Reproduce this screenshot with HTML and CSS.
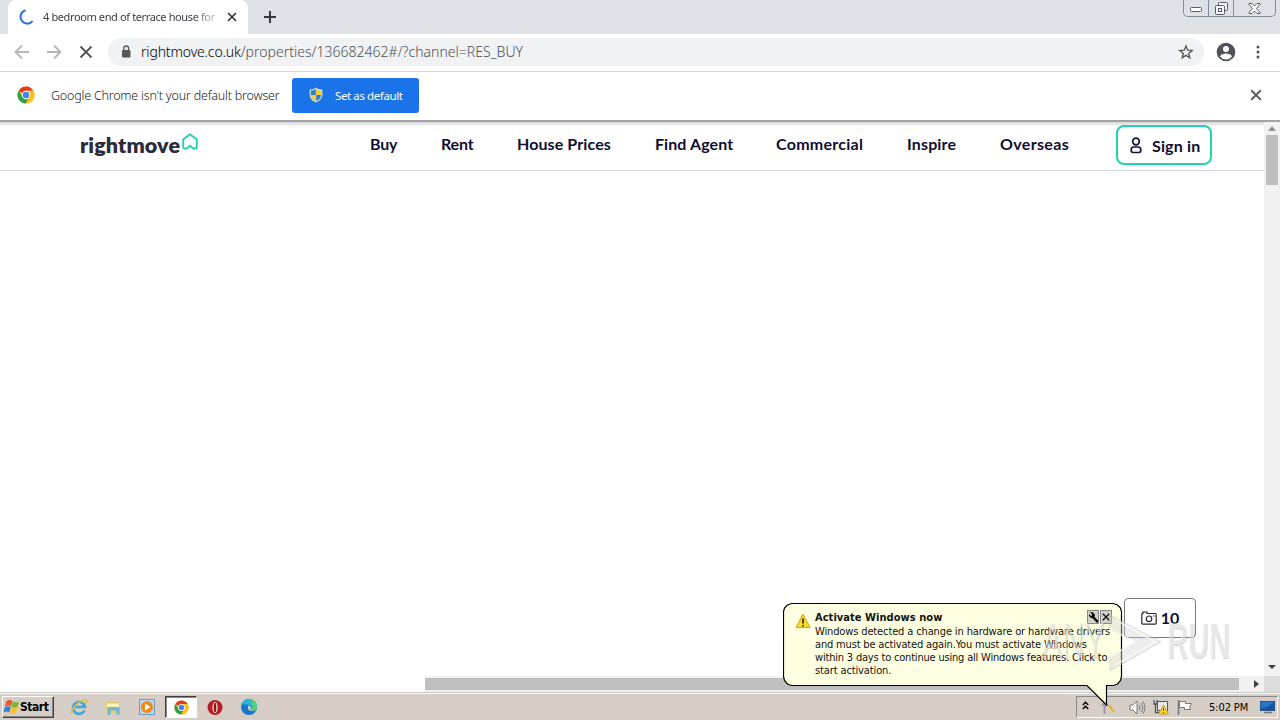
FILE: index.html
```html
<!DOCTYPE html>
<html lang="en">
<head>
    <meta charset="UTF-8">
    <meta name="viewport" content="width=device-width, initial-scale=1.0">
    <title>4 bedroom end of terrace house for sale</title>
    <link rel="stylesheet" href="styles.css">
</head>
<body>
    <!-- shared icons -->
    <svg class="icon-defs" width="0" height="0">
        <symbol id="chrome-logo" viewBox="0 0 18 18">
            <circle cx="9" cy="9" r="8.5" fill="#fbc116"/>
            <path d="M9 9 1.6 4.8A8.5 8.5 0 0 1 16.4 4.8H9z" fill="#e33b2e"/>
            <path d="M1.6 4.8A8.5 8.5 0 0 0 8.7 17.5L12.4 11 9 9 5.4 11z" fill="#2aa04a"/>
            <path d="M9 4.8H16.4A8.5 8.5 0 0 1 8.7 17.5L12.5 11z" fill="#fbc116"/>
            <circle cx="9" cy="9" r="4.2" fill="#fff"/>
            <circle cx="9" cy="9" r="3.3" fill="#4285e8"/>
        </symbol>
        <symbol id="cross" viewBox="0 0 10 10">
            <path d="M1 1l8 8M9 1L1 9" fill="none" stroke="currentColor" stroke-width="1.6"/>
        </symbol>
    </svg>

    <div class="tab-strip">
        <div class="tab">
            <svg class="spinner" width="16" height="16" viewBox="0 0 16 16"><path d="M6.5 1.3A6.8 6.8 0 1 0 13.6 12.2" fill="none" stroke="#2b6fdc" stroke-width="2"/></svg>
            <span class="tab-title">4 bedroom end of terrace house for</span>
            <svg class="tab-close" width="10" height="10"><use href="#cross"/></svg>
        </div>
        <svg class="new-tab" width="12" height="12" viewBox="0 0 12 12"><path d="M6 0v12M0 6h12" stroke="#35383d" stroke-width="2"/></svg>
        <div class="window-buttons">
            <span class="win-btn win-min"><svg width="13" height="6" viewBox="0 0 13 6"><rect x=".5" y=".5" width="11" height="4" rx="1" fill="#fff" stroke="#555c68"/></svg></span>
            <span class="win-btn win-max"><svg width="13" height="13" viewBox="0 0 13 13" fill="#f5f6f8" stroke="#555c68"><rect x="3.5" y=".5" width="9" height="8" rx="1"/><rect x=".5" y="3.5" width="9" height="9" rx="1"/><rect x="3.5" y="6.5" width="3" height="3"/></svg></span>
            <span class="win-btn win-close"><svg width="13" height="11" viewBox="0 0 13 11"><path d="M1 .5h3L6.5 3 9 .5h3v1L8.5 5.5 12 9.5v1H9L6.5 8 4 10.5H1v-1L4.5 5.5 1 1.5z" fill="#fff" stroke="#555c68"/></svg></span>
        </div>
    </div>

    <div class="toolbar">
        <svg class="nav-icon" width="16" height="16" viewBox="0 0 16 16"><path d="M15 8H2M8 1.5L1.5 8 8 14.5" fill="none" stroke="#b5b7ba" stroke-width="1.8"/></svg>
        <svg class="nav-icon" width="16" height="16" viewBox="0 0 16 16"><path d="M1 8h13M8 1.5L14.5 8 8 14.5" fill="none" stroke="#b5b7ba" stroke-width="1.8"/></svg>
        <svg class="nav-icon" width="16" height="16" viewBox="0 0 16 16"><path d="M2.5 2.5l11 11M13.5 2.5l-11 11" fill="none" stroke="#505357" stroke-width="1.8"/></svg>
        <div class="address-bar">
            <svg class="lock" width="10" height="13" viewBox="0 0 10 13"><rect x="1" y="5" width="8.5" height="7.5" rx="1" fill="#55585d"/><path d="M2.8 5V3.4a2.4 2.4 0 0 1 4.8 0V5" fill="none" stroke="#55585d" stroke-width="1.3"/></svg>
            <span class="url"><span class="url-host">rightmove.co.uk</span>/properties/136682462#/?channel=RES_BUY</span>
            <svg class="star" width="16" height="16" viewBox="0 0 16 16"><path d="M8 2l1.7 4.2 4.5.3-3.5 2.9 1.1 4.4L8 11.4l-3.8 2.4 1.1-4.4L1.8 6.5l4.5-.3z" fill="none" stroke="#54575c" stroke-width="1.4"/></svg>
        </div>
        <svg class="avatar" width="20" height="20" viewBox="0 0 20 20"><circle cx="10" cy="10" r="9.3" fill="#505359"/><circle cx="10" cy="7" r="3" fill="#fff"/><path d="M4 14.5c1-2.3 3.5-3 6-3s5 .7 6 3a7.6 7.6 0 0 1-12 0z" fill="#fff"/></svg>
        <svg class="menu-dots" width="4" height="14" viewBox="0 0 4 14" fill="#505359"><circle cx="2" cy="2" r="1.5"/><circle cx="2" cy="7" r="1.5"/><circle cx="2" cy="12" r="1.5"/></svg>
    </div>

    <div class="infobar">
        <svg width="18" height="18"><use href="#chrome-logo"/></svg>
        <span class="infobar-text">Google Chrome isn't your default browser</span>
        <button class="default-button">
            <svg width="14" height="16" viewBox="0 0 14 16"><path d="M7 .5C5 2 3 2.4.6 2.4V8C.6 11.5 3.5 14 7 15.5 10.5 14 13.4 11.5 13.4 8V2.4C11 2.4 9 2 7 .5z" fill="#c9d8c4"/><path d="M6.8 2v6H2V3.5C4 3.5 5.5 3 6.8 2zM7.2 8H12c0 3-2 4.7-4.8 6z" fill="#2b7bd0"/><path d="M7.2 2v6H12V3.5C10 3.5 8.5 3 7.2 2zM6.8 8H2c0 3 2 4.7 4.8 6z" fill="#f4cb32"/></svg>
            <span>Set as default</span>
        </button>
        <svg class="infobar-close" width="12" height="12"><use href="#cross"/></svg>
    </div>

    <div class="viewport">
        <div class="page">
            <header class="site-header">
                <div class="logo">
                    <span class="logo-text">rightmove</span>
                    <svg width="16" height="17" viewBox="0 0 16 17"><path d="M1.2 6.6L8 1.2l6.8 5.4v7.6q0 1.300-1.300 1.300h-2.200L8 12.700l-3.300 2.800H2.500q-1.300 0-1.300-1.300z" fill="none" stroke="#22d3ac" stroke-width="1.9" stroke-linejoin="round"/></svg>
                </div>
                <nav class="site-nav">
                    <a class="nav-buy">Buy</a>
                    <a class="nav-rent">Rent</a>
                    <a class="nav-prices">House Prices</a>
                    <a class="nav-agent">Find Agent</a>
                    <a class="nav-commercial">Commercial</a>
                    <a class="nav-inspire">Inspire</a>
                    <a class="nav-overseas">Overseas</a>
                </nav>
                <a class="sign-in">
                    <svg width="12" height="17" viewBox="0 0 12 17" fill="none" stroke="#16133a" stroke-width="1.7"><circle cx="6" cy="4.5" r="3.3"/><path d="M3.5 10h5c1.500 0 2.300 1.200 2.300 3.300 0 1.600-.6 2.200-1.800 2.200H3c-1.200 0-1.800-.6-1.800-2.200C1.200 11.200 2 10 3.500 10z"/></svg>
                    <span>Sign in</span>
                </a>
            </header>
            <main class="listing">
                <button class="photo-count">
                    <svg width="16" height="14" viewBox="0 0 16 14" fill="none" stroke="#25253a" stroke-width="1.2"><path d="M.8 3.500q0-1 1-1H2V1h4v1.500h8.200q1 0 1 1v8.700q0 1-1 1H1.800q-1 0-1-1z"/><circle cx="8" cy="7.8" r="2.8"/><path d="M12 5h1.500"/></svg>
                    <span>10</span>
                </button>
            </main>
            <div class="scroll-x">
                <div class="scroll-x-thumb"></div>
                <svg width="5" height="8" viewBox="0 0 5 8"><path d="M0 0l5 4-5 4z" fill="#404040"/></svg>
            </div>
        </div>
        <div class="scroll-y">
            <svg width="8" height="5" viewBox="0 0 8 5"><path d="M0 5l4-5 4 5z" fill="#929292"/></svg>
            <div class="scroll-y-thumb"></div>
            <svg class="scroll-down" width="8" height="4" viewBox="0 0 8 4"><path d="M0 0h8L4 4z" fill="#404040"/></svg>
            <div class="scroll-corner"></div>
        </div>
    </div>

    <div class="taskbar">
        <button class="start-button">
            <svg width="17" height="16" viewBox="0 0 17 16"><path d="M3.500 2q3-2 6 0L8 7.500q-3-2-6 0z" fill="#e8562a"/><path d="M10 2.500q3 1.500 6 0L14.500 8q-3 1.500-6 0z" fill="#77b82f"/><path d="M1.800 8q3-1.500 6 0L6.500 13.500q-3-2-6 0z" fill="#3a82cf"/><path d="M8.200 8.600q3 1.500 6 0L13 14q-3 1.500-6 0z" fill="#f4c02c"/></svg>
            <span>Start</span>
        </button>
        <div class="quick-launch">
            <span class="task"><svg width="18" height="18" viewBox="0 0 18 18"><path d="M14.500 12.500A6 6 0 1 1 15 9H4" fill="none" stroke="#3fa6dd" stroke-width="2.6"/><path d="M2 16C-1 12 13-1 16.500 2c1 1 0 3-.5 4" fill="none" stroke="#e8bd36" stroke-width="1.5"/></svg></span>
            <span class="task"><svg width="17" height="17" viewBox="0 0 17 17"><path d="M1 2h5l1 1h8v11H1z" fill="#e6cb6c"/><path d="M2 4.500h12v4H2z" fill="#fff2b5"/><path d="M2.500 16V9.500q0-1.500 1.500-1.500h9q1.500 0 1.500 1.500V16h-3v-4.500h-6V16z" fill="#6db7d9"/></svg></span>
            <span class="task"><svg width="17" height="17" viewBox="0 0 17 17"><rect x=".5" y=".5" width="15" height="15" fill="#b9d8ee" stroke="#6b9cc4"/><circle cx="8" cy="8" r="6" fill="#f18a1d"/><path d="M6 4.500v7L11.500 8z" fill="#fff"/></svg></span>
            <span class="task task-active"><svg width="15" height="15"><use href="#chrome-logo"/></svg></span>
            <span class="task"><svg width="17" height="17" viewBox="0 0 17 17"><circle cx="8" cy="8.500" r="7.500" fill="#b61d20"/><ellipse cx="8" cy="8.500" rx="2.600" ry="5.800" fill="#f3e4e0"/><ellipse cx="8" cy="8.500" rx="1.300" ry="5" fill="#981417"/></svg></span>
            <span class="task"><svg width="18" height="18" viewBox="0 0 18 18"><circle cx="9" cy="9" r="8" fill="#1479ca"/><path d="M1.200 7A8 8 0 0 1 17 9c0 3-3 4-6 3 1-1 1-4-2-5-3-1-6-1-7.800 0z" fill="#2fb5d4"/><path d="M10 1.100a8 8 0 0 1 7 8c0 3-3 4-6 3 2-2 2-6-1-11z" fill="#56cf75"/><path d="M8.500 7.500c-1.500 3 0 5.500 4 5.500l4-1c-1 .8-5 1-6-.5 1-1 .5-3-2-4z" fill="#d6ccc2"/></svg></span>
        </div>
        <div class="tray">
            <svg class="tray-more" width="7" height="9" viewBox="0 0 7 9"><path d="M.8 4l2.700-2.700L6.200 4M.8 8l2.700-2.700L6.200 8" fill="none" stroke="#000" stroke-width="1.4"/></svg>
            <svg class="tray-keys" width="15" height="15" viewBox="0 0 15 15"><path d="M3.500 4v10M1 5.500q3-4 6 0" fill="none" stroke="#9993a4" stroke-width="2"/><path d="M8 5l5 7" stroke="#e5b849" stroke-width="3"/></svg>
            <svg class="tray-sound" width="17" height="15" viewBox="0 0 17 15"><path d="M1 5h3l4-4v13l-4-4H1z" fill="#fff" stroke="#777"/><path d="M10 5q2 2.500 0 5M12 3q3.500 4.500 0 9M14 1.500q4 6 0 12" fill="none" stroke="#777"/></svg>
            <svg class="tray-network" width="17" height="16" viewBox="0 0 17 16"><path d="M4.500 2.500h10v9h-10z" fill="#e6e8ec" stroke="#555"/><path d="M1 1v4h3V1M2.500 5v8.500H6" fill="none" stroke="#555" stroke-width="1.3"/><path d="M10.500 6l5 9h-10z" fill="#ffd52b" stroke="#c59c16"/><path d="M10.500 9v3M10.500 13v1" stroke="#333"/></svg>
            <svg class="tray-flag" width="16" height="15" viewBox="0 0 16 15"><path d="M1.500 0v15" stroke="#777" stroke-width="1.5"/><path d="M2.500 1.500h6v2h6l-2 4 1 2h-6v-2h-5z" fill="#fff" stroke="#777"/></svg>
            <span class="clock">5:02 PM</span>
            <svg class="tray-desktop" width="16" height="13" viewBox="0 0 16 13"><rect x=".5" y=".5" width="14" height="9" fill="#2a76cd" stroke="#245589"/><path d="M1 7q7 0 13-6v8H1z" fill="#1654a5"/><path d="M4 11.500h8" stroke="#777" stroke-width="1.5"/></svg>
        </div>
    </div>

    <div class="balloon">
        <svg class="balloon-shape" width="340" height="106" viewBox="0 0 340 106"><path d="M8.500 1.500h322l4 1.500 3 3 1 3.500v65l-1 4-3 3.500-4 1.500h-7V103L304 83.500H8.500l-4-1.500-3-3.500-1-4v-65l1-3.500 3-3z" fill="#ffffe1" stroke="#000" stroke-width="1.2"/></svg>
        <svg class="balloon-warning" width="16" height="16" viewBox="0 0 16 16"><path d="M8 1l7 13.500H1z" fill="#f9d923" stroke="#d3a725" stroke-linejoin="round"/><path d="M8 5.500v5M8 12v1.500" stroke="#333" stroke-width="1.8"/></svg>
        <div class="balloon-body">
            <strong>Activate Windows now</strong>
            <p>
                <span class="line-1">Windows detected a change in hardware or hardware drivers</span>
                <span class="line-2">and must be activated again.You must activate Windows</span>
                <span class="line-3">within 3 days to continue using all Windows features. Click to</span>
                <span class="line-4">start activation.</span>
            </p>
        </div>
        <div class="balloon-buttons">
            <span><svg width="11" height="12" viewBox="0 0 11 12"><path d="M2 1L5 1.500 7 4 6.500 6 10 9.500v2H8.500L5 7.500 3 7 1 5V3l2 2 1.500-1z" fill="#000"/></svg></span>
            <span><svg width="8" height="8"><use href="#cross"/></svg></span>
        </div>
    </div>

    <div class="watermark">
        <span class="mark-any">ANY</span>
        <svg width="60" height="62" viewBox="0 0 60 62"><path d="M4 3l51 27L4 59V45l25-15L4 17z" fill="#d0d0d0" fill-opacity=".4" stroke="#b0b0b0" stroke-opacity=".35"/><path d="M4 17l25 13L4 45M10 8l39 22L9 53" fill="none" stroke="#fff" stroke-opacity=".6" stroke-width="2"/></svg>
        <span class="mark-run">RUN</span>
    </div>
</body>
</html>
```
FILE: styles.css
```css
* {
    margin: 0;
    padding: 0;
    box-sizing: border-box;
}

body {
    width: 1280px;
    height: 720px;
    display: flex;
    flex-direction: column;
    position: relative;
    overflow: hidden;
    background: #fff;
    font-family: "DejaVu Sans Condensed", "DejaVu Sans", sans-serif;
    font-stretch: condensed;
}

svg {
    display: block;
    flex: none;
}

button {
    font: inherit;
}

.icon-defs {
    position: absolute;
}

span,
a {
    white-space: nowrap;
}

/* Browser window */
.tab-strip {
    height: 34px;
    flex: none;
    display: flex;
    background: #dee1e6;
}

.tab {
    width: 240px;
    height: 34px;
    margin-left: 8px;
    padding: 0 11px;
    display: flex;
    align-items: center;
    background: #fff;
    border-radius: 8px 8px 0 0;
}

.tab-title {
    width: 177px;
    margin: -2px 0 0 8px;
    font-family: "Noto Sans", sans-serif;
    font-stretch: normal;
    font-size: 11px;
    letter-spacing: -0.38px;
    color: #3b3e43;
    mask-image: linear-gradient(90deg, #000 150px, transparent 180px);
}

.tab-close {
    margin-left: 7px;
    color: #303338;
}

.new-tab {
    margin: 11px 0 0 16px;
}

.window-buttons {
    width: 93px;
    height: 17px;
    margin: 0 4px 0 auto;
    display: flex;
    border: 1px solid #858b96;
    border-top: 0;
    border-radius: 0 0 5px 5px;
}

.win-btn {
    display: flex;
    justify-content: center;
    align-items: center;
    border-right: 1px solid #858b96;
}

.win-min,
.win-max {
    width: 25px;
}

.win-min {
    padding-top: 4px;
}

.win-close {
    flex: 1;
    border-right: 0;
}

.toolbar {
    height: 38px;
    flex: none;
    display: flex;
    align-items: center;
    padding: 0 20px 2px 14px;
    border-bottom: 1px solid #d5d7da;
}

.nav-icon {
    margin-right: 16px;
}

.address-bar {
    width: 1096px;
    height: 28px;
    margin-left: -2px;
    padding: 0 10px 0 13px;
    display: flex;
    align-items: center;
    background: #f0f2f4;
    border-radius: 14px;
}

.url {
    margin-left: 10px;
    font-family: "Noto Sans", sans-serif;
    font-stretch: normal;
    font-size: 14px;
    font-weight: 300;
    letter-spacing: 0.02px;
    color: #4c4f54;
}

.url-host {
    letter-spacing: -0.16px;
    color: #000;
}

.star {
    margin-left: auto;
}

.avatar {
    margin-left: 12px;
}

.menu-dots {
    margin-left: auto;
}

.infobar {
    height: 50px;
    flex: none;
    display: flex;
    align-items: center;
    padding: 0 18px 2px 17px;
    border-bottom: 2px solid #a2a2a2;
}

.infobar-text {
    width: 229px;
    margin-left: 16px;
    font-family: "Noto Sans", sans-serif;
    font-stretch: normal;
    font-size: 12.5px;
    font-weight: 300;
    letter-spacing: -0.21px;
    color: #202328;
}

.default-button {
    width: 127px;
    height: 35px;
    margin-left: 12px;
    padding-left: 17px;
    display: flex;
    align-items: center;
    gap: 12px;
    border: 0;
    border-radius: 3px;
    background: #1a73e8;
    color: #fff;
    font-family: "Noto Sans", sans-serif;
    font-stretch: normal;
    font-size: 11.5px;
    letter-spacing: -0.4px;
}

.infobar-close {
    margin-left: auto;
    color: #5b5e63;
}

/* Web page */
.viewport {
    flex: 1;
    min-height: 0;
    display: flex;
    box-shadow: inset 0 5px 4px -3px #d0d0d0;
}

.page {
    flex: 1;
    display: flex;
    flex-direction: column;
}

.site-header {
    height: 49px;
    flex: none;
    display: flex;
    padding: 3px 52px 0 80px;
    border-bottom: 1px solid #d6d7da;
}

.logo {
    width: 290px;
    display: flex;
    gap: 2px;
    padding-top: 8px;
}

.logo-text {
    width: 100px;
    margin-top: -1px;
    font-family: Lato, sans-serif;
    font-stretch: normal;
    font-size: 21.5px;
    font-weight: 800;
    line-height: 26px;
    letter-spacing: 0.12px;
    color: #2b2b39;
}

.site-nav {
    width: 746px;
    display: flex;
    padding-top: 8px;
    font-family: Lato, sans-serif;
    font-stretch: normal;
    font-size: 16px;
    font-weight: 700;
    line-height: 22px;
    color: #100d32;
}

.nav-buy { width: 71px; letter-spacing: -0.2px; }
.nav-rent { width: 76px; letter-spacing: -0.15px; }
.nav-prices { width: 138px; letter-spacing: 0.1px; }
.nav-agent { width: 121px; letter-spacing: 0.08px; }
.nav-commercial { width: 131px; letter-spacing: 0.27px; }
.nav-inspire { width: 93px; letter-spacing: 0.15px; }
.nav-overseas { letter-spacing: 0.35px; }

.sign-in {
    width: 96px;
    height: 40px;
    display: flex;
    align-items: center;
    gap: 10px;
    padding-left: 12px;
    border: 2px solid #22d3ac;
    border-radius: 8px;
    font-family: Lato, sans-serif;
    font-stretch: normal;
    font-size: 16px;
    font-weight: 700;
    letter-spacing: 0.15px;
    color: #100d32;
}

.listing {
    flex: 1;
    display: flex;
    justify-content: flex-end;
    align-items: flex-end;
    padding: 0 68px 38px 0;
}

.photo-count {
    width: 72px;
    height: 40px;
    padding-bottom: 1px;
    display: flex;
    justify-content: center;
    align-items: center;
    gap: 4px;
    border: 1px solid #777780;
    border-radius: 4px;
    background: #fff;
    color: #100d32;
    font-family: Lato, sans-serif;
    font-stretch: normal;
    font-size: 16px;
    font-weight: 700;
}

.scroll-x {
    height: 16px;
    flex: none;
    display: flex;
    align-items: center;
    margin-left: 425px;
    background: #f1f1f1;
}

.scroll-x-thumb {
    width: 814px;
    height: 12px;
    margin-right: 15px;
    background: #bfbfbf;
}

.scroll-y {
    width: 16px;
    display: flex;
    flex-direction: column;
    align-items: center;
    padding-top: 4px;
    background: #f1f1f1;
}

.scroll-y-thumb {
    width: 12px;
    height: 50px;
    margin-top: 4px;
    background: #bfbfbf;
}

.scroll-down {
    margin-top: auto;
}

.scroll-corner {
    width: 16px;
    height: 16px;
    margin-top: 7px;
    background: #dcdcdc;
}

/* Windows taskbar */
.taskbar {
    height: 28px;
    flex: none;
    display: flex;
    align-items: center;
    padding: 1px 2px 0;
    background: #d6cec6;
    border-top: 1px solid #c6c6c0;
    box-shadow: inset 0 1px #fff;
    font-size: 11px;
    color: #000;
}

.start-button {
    width: 52px;
    height: 22px;
    display: flex;
    align-items: center;
    gap: 0;
    border: 1px solid;
    border-color: #fff #404040 #404040 #fff;
    background: #d6cec6;
    box-shadow: inset -1px -1px #888;
    font-size: 12px;
    font-weight: 700;
    letter-spacing: -0.45px;
}

.quick-launch {
    display: flex;
    margin-left: 9px;
}

.task {
    width: 32px;
    height: 22px;
    margin-right: 2px;
    display: flex;
    align-items: center;
    justify-content: center;
}

.task-active {
    background: #fff;
    border: 1px solid;
    border-color: #404040 #fff #fff #404040;
    box-shadow: inset 1px 1px #888;
}

.tray {
    width: 202px;
    height: 22px;
    margin-left: auto;
    padding: 0 0 0 5px;
    display: flex;
    align-items: center;
    border: 1px solid;
    border-color: #888 #fff #fff #888;
}

.tray-more {
    margin-bottom: 3px;
}

.tray-keys {
    margin-left: 12px;
}

.tray-sound {
    margin-left: 13px;
}

.tray-network {
    margin-left: 7px;
}

.tray-flag {
    margin-left: 7px;
}

.clock {
    width: 40px;
    margin-left: 16px;
    letter-spacing: -0.1px;
}

.tray-desktop {
    margin-left: 11px;
}

/* Activation balloon over the page and taskbar */
.balloon {
    position: absolute;
    left: 783px;
    top: 602px;
    width: 340px;
    height: 106px;
    display: flex;
    padding: 8px 10px 0 12px;
    color: #111;
}

.balloon-shape {
    position: absolute;
    left: 0;
    top: 0;
}

.balloon-warning {
    position: relative;
    margin-top: 3px;
}

.balloon-body {
    position: relative;
    width: 275px;
    margin-left: 4px;
    font-size: 11px;
    line-height: 13px;
}

.balloon-body strong {
    display: block;
    padding-top: 1px;
    font-size: 11px;
    line-height: 13px;
    letter-spacing: 0.05px;
}

.balloon-body p {
    display: flex;
    flex-direction: column;
    padding-top: 1px;
}

.line-1 { letter-spacing: -0.13px; }
.line-2 { letter-spacing: -0.17px; }
.line-3 { letter-spacing: -0.19px; }
.line-4 { letter-spacing: -0.12px; }

.balloon-buttons {
    position: relative;
    display: flex;
    gap: 1px;
    margin-left: -3px;
}

.balloon-buttons span {
    width: 12px;
    height: 14px;
    display: flex;
    align-items: center;
    justify-content: center;
    background: #d4d0c8;
    border: 1px solid #888;
}

.watermark {
    position: absolute;
    left: 1042px;
    top: 612px;
    display: flex;
    align-items: center;
    font-family: "Liberation Sans", sans-serif;
    font-stretch: normal;
    font-size: 50px;
    line-height: 56px;
    color: rgba(255, 255, 255, 0.45);
    text-shadow: 1px 1px 1px rgba(110, 110, 110, 0.3);
}

.mark-any,
.mark-run {
    width: 64px;
    margin-top: -4px;
    transform: scaleX(0.61);
    transform-origin: left;
}

.mark-run {
    margin-left: 1px;
    font-weight: 700;
    transform: scaleX(0.58);
}
```
